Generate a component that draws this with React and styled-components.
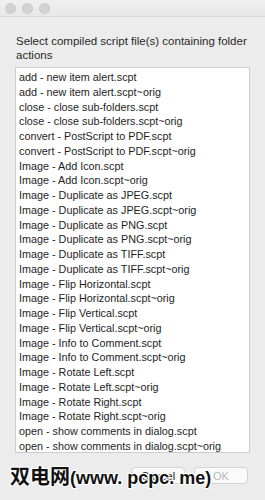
import React from 'react';
import styled, { createGlobalStyle } from 'styled-components';

const Global = createGlobalStyle`
    html, body{
        margin:0;
        padding:0;
        background:#ececec;
    }
    body{
        font-family:"Liberation Sans", Arial, sans-serif;
    }
`

const Window = styled.div`
    position:relative;
    width:265px;
    height:500px;
    background:#ececec;
    overflow:hidden;
    display:flex;
    flex-direction:column;
`

const TitleBar = styled.div`
    height:16px;
    display:flex;
    align-items:center;
    gap:6px;
    padding-left:5px;
    background:linear-gradient(#f0f0f0, #e8e8e8);
    border-bottom:1px solid #d9d9d9;
    span{
        width:11px;
        height:11px;
        border-radius:50%;
        background:#d2d2d2;
        border:1px solid #cacaca;
        box-sizing:border-box;
    }
`

const Body = styled.div`
    padding:17px 15px 0 15px;
    display:flex;
    flex-direction:column;
`

const Prompt = styled.p`
    margin:0 0 5px 1px;
    font-size:11.5px;
    line-height:14px;
    color:#2a2a2a;
`

const List = styled.ul`
    list-style:none;
    margin:0;
    padding:2px 0 3px 3px;
    width:235px;
    height:386px;
    box-sizing:border-box;
    background:#fff;
    border:1px solid #cdcdcd;
    li{
        font-size:10.8px;
        line-height:14.75px;
        color:#1e1e1e;
        white-space:nowrap;
    }
`

const Buttons = styled.div`
    display:flex;
    justify-content:flex-end;
    gap:9px;
    margin-top:14px;
    padding-right:2px;
`

const Button = styled.button`
    width:54px;
    height:17px;
    padding:0;
    font-family:"Liberation Sans", Arial, sans-serif;
    font-size:11px;
    background:#fafafa;
    border:1px solid #d4d4d4;
    border-radius:4px;
    color:${p => p.disabled ? '#b8b8b8' : '#222'};
`

const Watermark = styled.div`
    position:absolute;
    left:10px;
    top:461px;
    font-family:"Noto Sans CJK SC", "DejaVu Sans", sans-serif;
    font-size:20px;
    font-weight:700;
    line-height:30px;
    color:#111;
    text-shadow:1px 1px 0 #fff, -1px -1px 0 #fff, 1px -1px 0 #fff, -1px 1px 0 #fff;
    white-space:nowrap;
    .latin{
        font-family:"Liberation Sans", Arial, sans-serif;
        font-size:18px;
    }
`

const files = [
    'add - new item alert.scpt',
    'add - new item alert.scpt~orig',
    'close - close sub-folders.scpt',
    'close - close sub-folders.scpt~orig',
    'convert - PostScript to PDF.scpt',
    'convert - PostScript to PDF.scpt~orig',
    'Image - Add Icon.scpt',
    'Image - Add Icon.scpt~orig',
    'Image - Duplicate as JPEG.scpt',
    'Image - Duplicate as JPEG.scpt~orig',
    'Image - Duplicate as PNG.scpt',
    'Image - Duplicate as PNG.scpt~orig',
    'Image - Duplicate as TIFF.scpt',
    'Image - Duplicate as TIFF.scpt~orig',
    'Image - Flip Horizontal.scpt',
    'Image - Flip Horizontal.scpt~orig',
    'Image - Flip Vertical.scpt',
    'Image - Flip Vertical.scpt~orig',
    'Image - Info to Comment.scpt',
    'Image - Info to Comment.scpt~orig',
    'Image - Rotate Left.scpt',
    'Image - Rotate Left.scpt~orig',
    'Image - Rotate Right.scpt',
    'Image - Rotate Right.scpt~orig',
    'open - show comments in dialog.scpt',
    'open - show comments in dialog.scpt~orig',
]

const App = () => {
    return (
        <Window>
            <Global/>
            <TitleBar>
                <span/><span/><span/>
            </TitleBar>
            <Body>
                <Prompt>Select compiled script file(s) containing folder actions</Prompt>
                <List>
                    {files.map((f, i) => <li key={i}>{f}</li>)}
                </List>
                <Buttons>
                    <Button>Cancel</Button>
                    <Button disabled>OK</Button>
                </Buttons>
            </Body>
            <Watermark>双电网<span className='latin'>(www. pcpc. me)</span></Watermark>
        </Window>
    );
};

export default App;
